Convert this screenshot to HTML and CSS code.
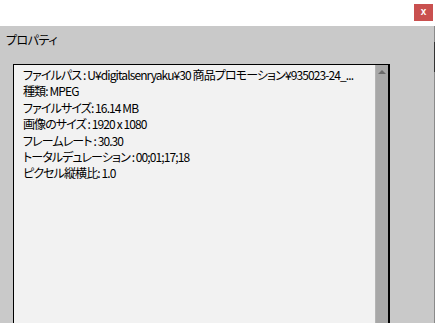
FILE: index.html
```html
<!DOCTYPE html>
<html lang="ja">
<head>
<meta charset="utf-8">
<link rel="stylesheet" href="styles.css">
</head>
<body>
<div class="window">
  <div class="topbar">
    <div class="close">x</div>
  </div>
  <div class="main">
    <div class="panel">
      <div class="title">プロパティ</div>
      <div class="box">
        <div class="content">
          <div class="line">ファイルパス : U¥digitalsenryaku¥30 商品プロモーション¥935023-24_...</div>
          <div class="line">種類: MPEG</div>
          <div class="line">ファイルサイズ: 16.14 MB</div>
          <div class="line">画像のサイズ : 1920 x 1080</div>
          <div class="line">フレームレート : 30.30</div>
          <div class="line">トータルデュレーション : 00;01;17;18</div>
          <div class="line">ピクセル縦横比: 1.0</div>
        </div>
        <div class="scrollbar"><div class="arrow"></div></div>
      </div>
    </div>
    <div class="edge">
      <div class="edge-dark"></div>
    </div>
  </div>
</div>
</body>
</html>
```
FILE: styles.css
```css
html, body {
  margin: 0;
  padding: 0;
}
body {
  width: 435px;
  height: 323px;
  overflow: hidden;
  background: #c9c9c9;
  font-family: "Noto Sans CJK JP", "Liberation Sans", sans-serif;
  font-size: 12px;
  color: #000;
  font-feature-settings: "palt";
}
.window {
  display: flex;
  flex-direction: column;
  height: 323px;
}
.topbar {
  height: 26px;
  background: #fff;
  display: flex;
  justify-content: flex-end;
  align-items: flex-start;
  padding-right: 2px;
}
.close {
  margin-top: 4px;
  width: 19px;
  height: 17px;
  background: #c9504f;
  color: #fff;
  font-family: "Liberation Sans", sans-serif;
  font-weight: bold;
  font-size: 10px;
  display: flex;
  align-items: center;
  justify-content: center;
  line-height: 1;
  padding-bottom: 2px;
  box-sizing: border-box;
}
.main {
  flex: 1;
  display: flex;
  min-height: 0;
}
.panel {
  flex: 1;
  display: flex;
  flex-direction: column;
  min-width: 0;
}
.title {
  padding: 7px 0 0 6px;
  height: 38px;
  box-sizing: border-box;
  line-height: 14px;
  font-size: 12px;
  letter-spacing: -0.5px;
  flex: none;
}
.box {
  margin-left: 13px;
  width: 377px;
  box-sizing: border-box;
  flex: 1;
  display: flex;
  border-left: 1px solid #000;
  border-top: 1px solid #000;
  background: #f2f2f2;
}
.content {
  flex: 1;
  min-width: 0;
  overflow: hidden;
  padding: 2px 0 0 9px;
}
.line {
  height: 16.4px;
  line-height: 16px;
  white-space: nowrap;
  letter-spacing: -0.9px;
}
.scrollbar {
  flex: none;
  width: 12px;
  background: #a8a8a8;
  border-left: 1px solid #b4b4b4;
  border-right: 2px solid #000;
  display: flex;
  justify-content: center;
  padding-top: 5px;
}
.arrow {
  width: 0;
  height: 0;
  border-left: 4px solid transparent;
  border-right: 4px solid transparent;
  border-bottom: 4px solid #6a6a6a;
}
.edge {
  width: 1px;
  flex: none;
  background: #8a8a8a;
  padding-top: 16px;
}
.edge-dark {
  height: 30px;
  background: #333;
}
```
